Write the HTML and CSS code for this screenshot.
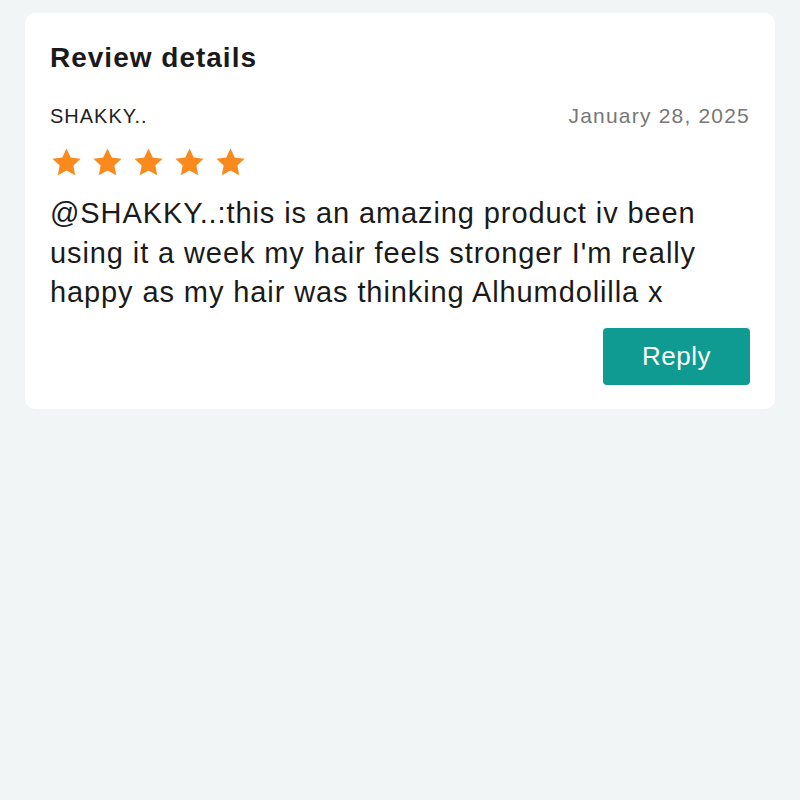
FILE: index.html
```html
<!DOCTYPE html>
<html lang="en">

<head>
    <meta charset="UTF-8">
    <meta name="viewport" content="width=device-width, initial-scale=1.0">
    <title>Review details</title>
    <link rel="stylesheet" href="styles.css">
</head>

<body>
    <div class="card">
        <h2 class="card-title">Review details</h2>
        <div class="review-meta">
            <span class="reviewer">SHAKKY..</span>
            <span class="review-date">January 28, 2025</span>
        </div>
        <div class="stars">
            <svg class="star" viewBox="0 0 24 24"><path d="M12 1.8l3.1 6.6 7.1.9-5.2 4.9 1.3 7.1L12 17.8l-6.3 3.5 1.3-7.1-5.2-4.9 7.1-.9z" /></svg>
            <svg class="star" viewBox="0 0 24 24"><path d="M12 1.8l3.1 6.6 7.1.9-5.2 4.9 1.3 7.1L12 17.8l-6.3 3.5 1.3-7.1-5.2-4.9 7.1-.9z" /></svg>
            <svg class="star" viewBox="0 0 24 24"><path d="M12 1.8l3.1 6.6 7.1.9-5.2 4.9 1.3 7.1L12 17.8l-6.3 3.5 1.3-7.1-5.2-4.9 7.1-.9z" /></svg>
            <svg class="star" viewBox="0 0 24 24"><path d="M12 1.8l3.1 6.6 7.1.9-5.2 4.9 1.3 7.1L12 17.8l-6.3 3.5 1.3-7.1-5.2-4.9 7.1-.9z" /></svg>
            <svg class="star" viewBox="0 0 24 24"><path d="M12 1.8l3.1 6.6 7.1.9-5.2 4.9 1.3 7.1L12 17.8l-6.3 3.5 1.3-7.1-5.2-4.9 7.1-.9z" /></svg>
        </div>
        <p class="review-text">@SHAKKY..:this is an amazing product iv been using it a week my hair feels stronger I'm really happy as my hair was thinking Alhumdolilla x</p>
        <div class="actions">
            <button class="reply-button">Reply</button>
        </div>
    </div>
</body>

</html>
```

FILE: styles.css
```css
body {
    font-family: "Liberation Sans", Arial, sans-serif;
    background-color: #f2f5f6;
    margin: 0;
    padding: 13px 25px;
}

.card {
    background: #ffffff;
    border-radius: 10px;
    padding: 27px 25px 24px;
}

.card-title {
    font-size: 28px;
    font-weight: bold;
    letter-spacing: 1px;
    color: #1a1a1a;
    margin: 0 0 26px;
    line-height: 36px;
}

.review-meta {
    display: flex;
    justify-content: space-between;
    align-items: center;
    font-size: 20px;
    line-height: 28px;
}

.reviewer {
    color: #222;
    letter-spacing: 1px;
}

.review-date {
    color: #777;
    font-size: 21px;
    letter-spacing: 1.2px;
}

.stars {
    display: flex;
    gap: 8px;
    margin-top: 16px;
}

.star {
    width: 33px;
    height: 33px;
    fill: #fa8a1e;
}

.review-text {
    font-size: 29px;
    line-height: 39.5px;
    letter-spacing: 0.9px;
    color: #1a1a1a;
    margin: 15px 0 0;
}

.actions {
    display: flex;
    justify-content: flex-end;
    margin-top: 15px;
}

.reply-button {
    font-family: "Liberation Sans", Arial, sans-serif;
    font-size: 26px;
    letter-spacing: 0.5px;
    color: #ffffff;
    background: #0f9b92;
    border: none;
    border-radius: 4px;
    width: 147px;
    height: 57px;
    cursor: pointer;
}
```
